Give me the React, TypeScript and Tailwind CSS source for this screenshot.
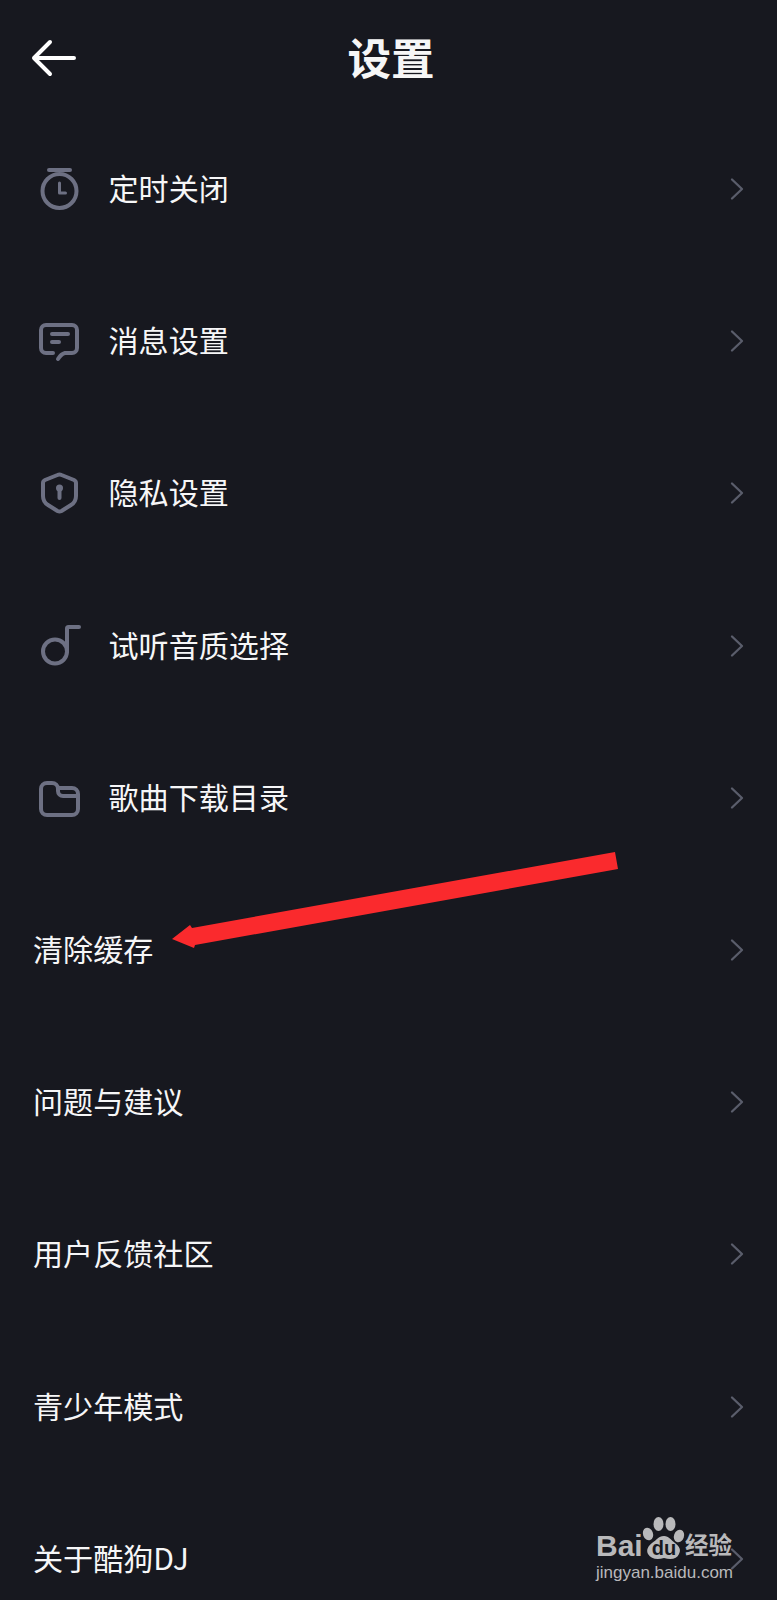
import type { ReactNode } from "react";

function Timer() {
  return (
    <>
      <path d="M16 7h21" />
      <circle cx="26.5" cy="28" r="17" />
      <path d="M26.5 20v10h6" strokeWidth="3" />
    </>
  );
}

function Message() {
  return (
    <>
      <path d="M20 38h-7a5 5 0 0 1-5-5V15a5 5 0 0 1 5-5h26a5 5 0 0 1 5 5v18a5 5 0 0 1-5 5h-7q-4 1-7 6" />
      <path d="M19 19h16M19 27h7" />
    </>
  );
}

function Shield() {
  return (
    <>
      <path d="M24.5 8 L12 13q-2 1-2 3v13q0 6 5 9l9.5 6q2 1 4 0l9.500-6q5-3 5-9V16q0-2-2-3L28.500 8q-2-1-4 0Z" />
      <circle cx="26.500" cy="21" r="3.500" fill="currentColor" stroke="none" />
      <path d="M26.500 22v9" />
    </>
  );
}

function Note() {
  return (
    <>
      <circle cx="22" cy="31.500" r="12" />
      <path d="M34 31.500V8.500q0-1.500 1.500-1.500H46" />
    </>
  );
}

function Folder() {
  return (
    <>
      <path d="M25 16h14a6 6 0 0 1 6 6v15a6 6 0 0 1-6 6H14a6 6 0 0 1-6-6V17a6 6 0 0 1 6-6h5a6 6 0 0 1 6 6v2a5 5 0 0 0 5 5h15" />
    </>
  );
}

const rows: { label: string; icon?: ReactNode }[] = [
  { label: "定时关闭", icon: <Timer /> },
  { label: "消息设置", icon: <Message /> },
  { label: "隐私设置", icon: <Shield /> },
  { label: "试听音质选择", icon: <Note /> },
  { label: "歌曲下载目录", icon: <Folder /> },
  { label: "清除缓存" },
  { label: "问题与建议" },
  { label: "用户反馈社区" },
  { label: "青少年模式" },
  { label: "关于酷狗DJ" },
];

function Row({ label, icon }: { label: string; icon?: ReactNode }) {
  return (
    <div className="flex h-[152.2px] shrink-0 items-center pl-[33px] pr-[33px]">
      {icon && (
        <svg
          viewBox="0 0 52 52"
          fill="none"
          stroke="currentColor"
          strokeWidth="4"
          strokeLinecap="round"
          strokeLinejoin="round"
          className="mr-[23.500px] h-[52px] w-[52px] text-[#6d7083]"
        >
          {icon}
        </svg>
      )}
      <span className="mb-[4px] text-[30.100px] leading-[40px] text-[#f6f6f7]">{label}</span>
      <svg viewBox="0 0 14 24" fill="none" className="ml-auto h-[24px] w-[14px]">
        <path d="M2 2.500l10 9.500L2 21.500" stroke="#5a5d6b" strokeWidth="2.300" strokeLinecap="round" strokeLinejoin="round" />
      </svg>
    </div>
  );
}

function Watermark() {
  return (
    <div className="absolute left-[596px] top-[1512px] h-[88px] w-[140px] font-['Liberation_Sans','Noto_Sans_CJK_SC',sans-serif] text-[#b9b9bb]">
      <div className="flex h-[50px] items-end">
        <span className="w-[44px] shrink-0 text-[30px] font-bold leading-[32px]">Bai</span>
        <svg viewBox="0 0 50 50" className="h-[50px] w-[50px] shrink-0" fill="currentColor">
          <ellipse cx="8" cy="22" rx="5" ry="6.500" transform="rotate(-20 8 22)" />
          <ellipse cx="18.500" cy="12" rx="5" ry="7" />
          <ellipse cx="30.500" cy="12" rx="5" ry="7" />
          <ellipse cx="39" cy="24" rx="5" ry="6.500" transform="rotate(20 39 24)" />
          <path d="M24 24c5 0 7 4 11 7 5 4 6 7 4 11-2 5-8 6-15 4-7 2-13 1-16-4-2-4 0-8 4-11 5-3 6-7 12-7Z" />
          <text x="24" y="43" textAnchor="middle" fontSize="20" fontWeight="700" fill="#17181f">du</text>
        </svg>
        <span className="ml-[-5px] whitespace-nowrap text-[23.500px] font-bold leading-[32px]">经验</span>
      </div>
      <div className="whitespace-nowrap text-[17px] leading-[22px]">jingyan.baidu.com</div>
    </div>
  );
}

export default function App() {
  return (
    <div className="relative h-[1600px] w-[777px] overflow-hidden bg-[#17181f] font-['Noto_Sans_CJK_SC',sans-serif]">
      <header className="relative flex h-[113px] justify-center pl-[5px] pt-[27px]">
        <svg viewBox="0 0 50 40" fill="none" className="absolute left-[29px] top-[38px] h-[40px] w-[50px]">
          <path d="M21 4L5 20l16 16M5 20h40" stroke="#fff" strokeWidth="4" strokeLinecap="round" strokeLinejoin="round" />
        </svg>
        <h1 className="text-[43.500px] font-bold leading-[60px] text-[#f6f6f6]">设置</h1>
      </header>
      {rows.map((r) => (
        <Row key={r.label} label={r.label} icon={r.icon} />
      ))}
      {/* red annotation arrow drawn over the list */}
      <svg viewBox="0 0 777 1600" className="pointer-events-none absolute left-0 top-0 h-[1600px] w-[777px]">
        <polygon points="615,852 618,869 195,945 194,948 172,939 190,925 192,928" fill="#fa2a2d" />
      </svg>
      <Watermark />
    </div>
  );
}
